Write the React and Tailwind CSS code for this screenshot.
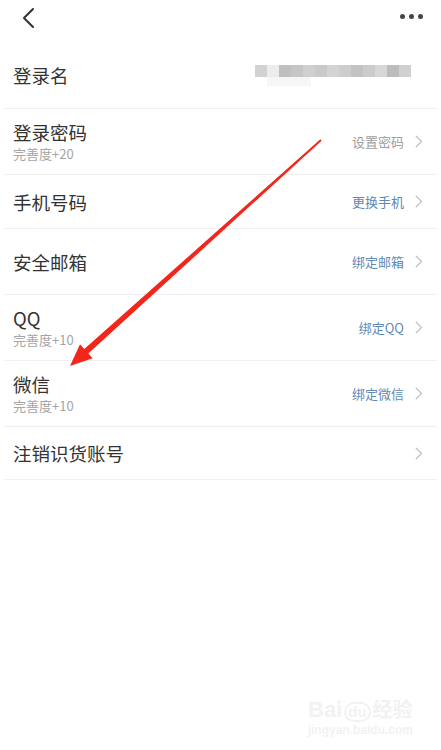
import React from 'react';

const font = { fontFamily: '"Noto Sans CJK SC", "Noto Sans", sans-serif' };

function Chevron() {
    return (
        <svg className="w-[8px] h-[13px] ml-[11px]" viewBox="0 0 8 13" fill="none">
            <path d="M1.2 1.2L6.5 6.5l-5.3 5.3" stroke="#c2c2c2" strokeWidth="1.3" strokeLinecap="round" strokeLinejoin="round" />
        </svg>
    );
}

function Row({ title, sub, action, muted, height }) {
    return (
        <div className={`flex items-center justify-between border-b border-[#f0f0f0] pl-[9px] pr-[14px] ${height}`}>
            <div className="flex flex-col">
                <span className="text-[18.5px] leading-[24px] text-[#333]">{title}</span>
                {sub && <span className="text-[13px] leading-[18px] text-[#a5a5a5] mt-[1px]">{sub}</span>}
            </div>
            <div className="flex items-center">
                {action && (
                    <span className={`text-[13px] ${muted ? 'text-[#9e9e9e]' : 'text-[#5f89b4]'}`}>{action}</span>
                )}
                <Chevron />
            </div>
        </div>
    );
}

const blur = ['#d2d2d2', '#ececec', '#bfbfbf', '#c6c6c6', '#cfcfcf', '#c9c9c9', '#d4d4d4', '#cdcdcd', '#c3c3c3', '#cbcbcb', '#d7d7d7', '#bcbcbc', '#d0d0d0'];

export default function App() {
    return (
        <div className="relative w-[441px] h-[750px] bg-white overflow-hidden" style={font}>
            {/* Header */}
            <div className="flex justify-between h-[42px] pl-[20px] pr-[18px] pt-[7px]">
                <svg className="w-[16px] h-[22px]" viewBox="0 0 16 22" fill="none">
                    <path d="M13 2L4 11l9 9" stroke="#333" strokeWidth="2" strokeLinecap="round" strokeLinejoin="round" />
                </svg>
                <div className="flex gap-[4px] mt-[7px]">
                    <span className="w-[5px] h-[5px] rounded-full bg-[#444]" />
                    <span className="w-[5px] h-[5px] rounded-full bg-[#444]" />
                    <span className="w-[5px] h-[5px] rounded-full bg-[#444]" />
                </div>
            </div>

            <div className="mx-[4px]">
                <div className="flex items-center justify-between border-b border-[#f0f0f0] pl-[9px] pr-[26px] h-[67px]">
                    <span className="text-[18.5px] leading-[24px] text-[#333]">登录名</span>
                    <div className="flex flex-col">
                        <div className="flex">
                            {blur.map((c, i) => (
                                <span key={i} className="w-[12px] h-[12px]" style={{ backgroundColor: c }} />
                            ))}
                        </div>
                        <div className="h-[9px] w-[44px] ml-[12px] bg-[#f6f6f6]" />
                    </div>
                </div>
                <Row title="登录密码" sub="完善度+20" action="设置密码" muted height="h-[66px]" />
                <Row title="手机号码" action="更换手机" height="h-[54px]" />
                <Row title="安全邮箱" action="绑定邮箱" height="h-[66px]" />
                <Row title="QQ" sub="完善度+10" action="绑定QQ" height="h-[66px]" />
                <Row title="微信" sub="完善度+10" action="绑定微信" height="h-[66px]" />
                <Row title="注销识货账号" height="h-[53px]" />
            </div>

            {/* annotation arrow */}
            <svg className="absolute left-0 top-0 pointer-events-none" width="441" height="750" viewBox="0 0 441 750">
                <polygon
                    points="321.6,140.8 320.4,139.2 84.3,349.1 80,344.3 70,366 92.6,358.3 88.3,353.5"
                    fill="#f2261b"
                />
            </svg>

            {/* watermark */}
            <div className="absolute right-[28px] bottom-[12px] flex flex-col items-center text-[#f2f2f2]" style={{ fontFamily: '"Liberation Sans", "Noto Sans CJK SC", sans-serif' }}>
                <div className="flex items-end font-bold text-[22px] leading-[24px]">
                    <span>Bai</span>
                    <span className="text-[15px] rounded-full border-2 border-[#f2f2f2] px-[2px] leading-[16px] mx-[2px]">du</span>
                    <span className="text-[20px]">经验</span>
                </div>
                <span className="text-[12px] font-bold leading-[16px]">jingyan.baidu.com</span>
            </div>
        </div>
    );
}
